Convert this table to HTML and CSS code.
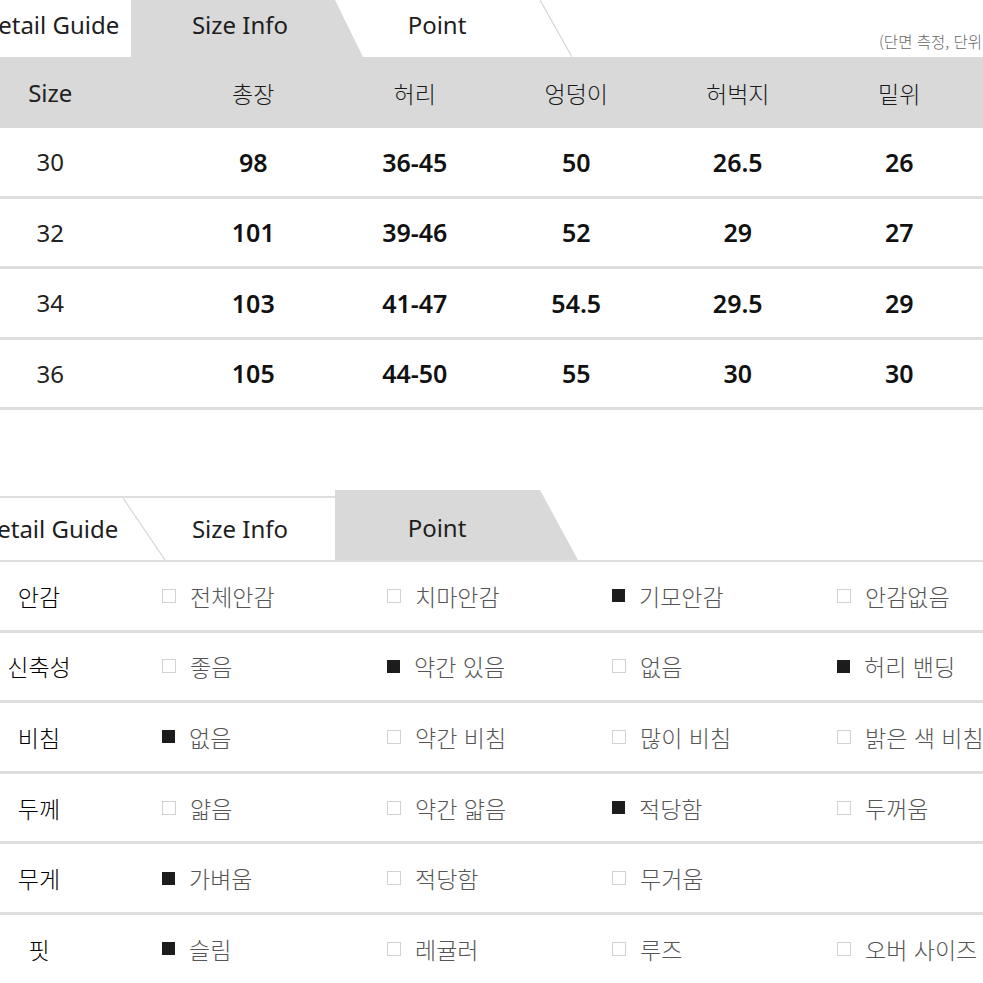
FILE: index.html
```html
<!DOCTYPE html>
<html lang="ko">
<head>
<meta charset="utf-8">
<title>Size Info</title>
<link rel="stylesheet" href="styles.css">
</head>
<body>
<div class="page">
  <section class="sizebox">
    <div class="tabs tabs-top">
      <div class="tab top-t1"><span>Detail Guide</span></div>
      <div class="tab top-t2 active"><span>Size Info</span></div>
      <div class="tab top-t3 slanted"><span>Point</span></div>
      <div class="note">(단면 측정, 단위: cm)</div>
    </div>
    <div class="size-table">
      <div class="srow head">
        <div class="c first">Size</div>
        <div class="c">총장</div>
        <div class="c">허리</div>
        <div class="c">엉덩이</div>
        <div class="c">허벅지</div>
        <div class="c">밑위</div>
      </div>
      <div class="srow">
        <div class="c first">30</div>
        <div class="c b">98</div>
        <div class="c b">36-45</div>
        <div class="c b">50</div>
        <div class="c b">26.5</div>
        <div class="c b">26</div>
      </div>
      <div class="srow">
        <div class="c first">32</div>
        <div class="c b">101</div>
        <div class="c b">39-46</div>
        <div class="c b">52</div>
        <div class="c b">29</div>
        <div class="c b">27</div>
      </div>
      <div class="srow">
        <div class="c first">34</div>
        <div class="c b">103</div>
        <div class="c b">41-47</div>
        <div class="c b">54.5</div>
        <div class="c b">29.5</div>
        <div class="c b">29</div>
      </div>
      <div class="srow">
        <div class="c first">36</div>
        <div class="c b">105</div>
        <div class="c b">44-50</div>
        <div class="c b">55</div>
        <div class="c b">30</div>
        <div class="c b">30</div>
      </div>
    </div>
  </section>

  <section class="pointbox">
    <div class="tabs tabs-bottom">
      <div class="tab bot-t1 slanted"><span>Detail Guide</span></div>
      <div class="tab bot-t2"><span>Size Info</span></div>
      <div class="tab bot-t3 active"><span>Point</span></div>
    </div>
    <div class="point-table">
      <div class="prow">
        <div class="lab">안감</div>
        <div class="opt"><i class="box"></i>전체안감</div>
        <div class="opt"><i class="box"></i>치마안감</div>
        <div class="opt"><i class="box on"></i>기모안감</div>
        <div class="opt"><i class="box"></i>안감없음</div>
      </div>
      <div class="prow">
        <div class="lab">신축성</div>
        <div class="opt"><i class="box"></i>좋음</div>
        <div class="opt"><i class="box on"></i>약간 있음</div>
        <div class="opt"><i class="box"></i>없음</div>
        <div class="opt"><i class="box on"></i>허리 밴딩</div>
      </div>
      <div class="prow">
        <div class="lab">비침</div>
        <div class="opt"><i class="box on"></i>없음</div>
        <div class="opt"><i class="box"></i>약간 비침</div>
        <div class="opt"><i class="box"></i>많이 비침</div>
        <div class="opt"><i class="box"></i>밝은 색 비침</div>
      </div>
      <div class="prow">
        <div class="lab">두께</div>
        <div class="opt"><i class="box"></i>얇음</div>
        <div class="opt"><i class="box"></i>약간 얇음</div>
        <div class="opt"><i class="box on"></i>적당함</div>
        <div class="opt"><i class="box"></i>두꺼움</div>
      </div>
      <div class="prow">
        <div class="lab">무게</div>
        <div class="opt"><i class="box on"></i>가벼움</div>
        <div class="opt"><i class="box"></i>적당함</div>
        <div class="opt"><i class="box"></i>무거움</div>
        <div class="opt"></div>
      </div>
      <div class="prow">
        <div class="lab">핏</div>
        <div class="opt"><i class="box on"></i>슬림</div>
        <div class="opt"><i class="box"></i>레귤러</div>
        <div class="opt"><i class="box"></i>루즈</div>
        <div class="opt"><i class="box"></i>오버 사이즈</div>
      </div>
    </div>
  </section>
</div>
</body>
</html>
```

FILE: styles.css
```css
* { box-sizing: border-box; }
html, body { margin: 0; padding: 0; background: #fff; }
body {
  width: 983px;
  height: 983px;
  overflow: hidden;
  font-family: "Noto Sans", "Noto Sans CJK KR", sans-serif;
  color: #222;
}
.page {
  margin-left: -84px;
  width: 1160px;
}

/* ---------- tabs ---------- */
.tabs {
  display: flex;
  align-items: flex-end;
}
.tab {
  position: relative;
  display: flex;
  align-items: center;
  justify-content: center;
  font-size: 24px;
  color: #1e1e1e;
  white-space: nowrap;
}
.tab.active { background: #d9d9d9; }
.tab.slanted::after {
  content: "";
  position: absolute;
  top: 0;
  right: 0;
  height: 100%;
  background: linear-gradient(to top right, transparent calc(50% - 1px), #cfcfcf 50%, transparent calc(50% + 1px));
}

.tabs-top { height: 57px; }
.tabs-top .tab { height: 57px; padding-bottom: 8px; }
.top-t1 { width: 215px; padding-left: 53px; }
.top-t2 {
  width: 232px;
  padding-right: 14px;
  clip-path: polygon(0 0, 204px 0, 100% 100%, 0 100%);
}
.top-t3 { width: 209px; padding-right: 61px; }
.top-t3::after { width: 32px; }
.note {
  margin-left: 307px;
  padding-bottom: 5px;
  font-size: 15.5px;
  font-weight: 300;
  color: #666;
  white-space: nowrap;
  font-family: "Noto Sans CJK KR", sans-serif;
}

.tabs-bottom {
  height: 72px;
  border-bottom: 2px solid #dedede;
}
.bot-t1, .bot-t2 {
  height: 64px;
  border-top: 2px solid #dedede;
  padding-bottom: 2px;
}
.bot-t1 { width: 249px; padding-left: 17px; }
.bot-t1::after { width: 42px; }
.bot-t2 { width: 170px; padding-right: 20px; }
.bot-t3 {
  height: 70px;
  width: 243px;
  padding-right: 39px;
  padding-top: 4px;
  clip-path: polygon(0 0, 205px 0, 100% 100%, 0 100%);
}

/* ---------- size table ---------- */
.size-table { display: flex; flex-direction: column; }
.srow {
  display: grid;
  grid-template-columns: 256.5px repeat(5, 161.5px) 1fr;
  height: 70.5px;
  border-bottom: 3px solid #dedede;
  align-items: center;
}
.srow.head {
  background: #d9d9d9;
  border-bottom: 0;
  height: 71px;
}
.c {
  text-align: center;
  font-size: 23px;
  color: #1a1a1a;
  font-family: "Noto Sans CJK KR", sans-serif;
  font-weight: 300;
}
.srow .c.first {
  padding-left: 12px;
  font-family: "Noto Sans", sans-serif;
  font-weight: 400;
  font-size: 24px;
  color: #222;
}
.c.b {
  font-family: "Noto Sans", sans-serif;
  font-weight: 600;
  font-size: 25px;
  color: #111;
}

/* ---------- point table ---------- */
.pointbox { margin-top: 80px; }
.point-table { display: flex; flex-direction: column; }
.prow {
  display: grid;
  grid-template-columns: 246px repeat(4, 225px);
  height: 70.6px;
  border-bottom: 3px solid #dedede;
  align-items: center;
}
.lab {
  text-align: center;
  font-size: 23px;
  font-weight: 300;
  color: #000;
  font-family: "Noto Sans CJK KR", sans-serif;
}
.opt {
  display: flex;
  align-items: center;
  gap: 14px;
  font-size: 23px;
  color: #555;
  font-weight: 300;
  white-space: nowrap;
  font-family: "Noto Sans CJK KR", sans-serif;
}
.box {
  display: block;
  width: 14px;
  height: 14px;
  border: 1px solid #d2d2d2;
  background: #fff;
}
.box.on {
  width: 13px;
  height: 13px;
  background: #1c1c1c;
  border-color: #1c1c1c;
}
```
